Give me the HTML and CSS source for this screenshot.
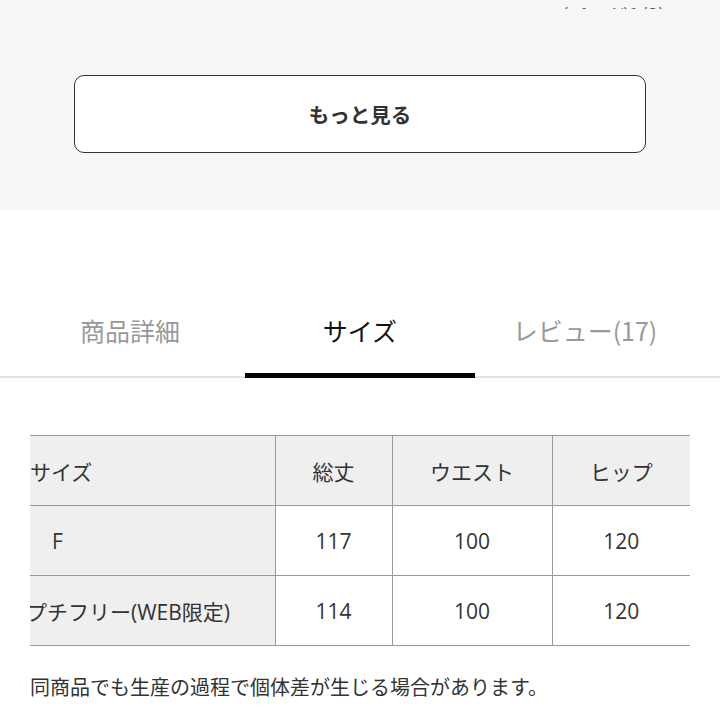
FILE: index.html
```html
<!DOCTYPE html>
<html lang="ja">
<head>
    <meta charset="utf-8">
    <link rel="stylesheet" href="styles.css">
</head>
<body>
    <div class="more-area">
        <div class="peek">
            <span>(ページ1/3)</span>
        </div>
        <button class="more-btn">もっと見る</button>
    </div>

    <div class="tabs">
        <div class="tab first">商品詳細</div>
        <div class="tab active">サイズ</div>
        <div class="tab last">レビュー(17)</div>
    </div>

    <div class="size-wrap">
        <table class="size-table">
            <colgroup>
                <col class="c-label">
                <col class="c-len">
                <col class="c-waist">
                <col class="c-hip">
            </colgroup>
            <thead>
                <tr>
                    <th class="label head">サイズ</th>
                    <th>総丈</th>
                    <th>ウエスト</th>
                    <th>ヒップ</th>
                </tr>
            </thead>
            <tbody>
                <tr>
                    <td class="label f">F</td>
                    <td>117</td>
                    <td>100</td>
                    <td>120</td>
                </tr>
                <tr>
                    <td class="label petit">プチフリー(WEB限定)</td>
                    <td>114</td>
                    <td>100</td>
                    <td>120</td>
                </tr>
            </tbody>
        </table>
    </div>

    <p class="note">同商品でも生産の過程で個体差が生じる場合があります。</p>
</body>
</html>
```

FILE: styles.css
```css
body {
    margin: 0;
    background-color: #fff;
    font-family: "Noto Sans CJK JP", "Noto Sans", sans-serif;
    color: #333;
}
.more-area {
    background-color: #f7f7f7;
    height: 210px;
    overflow: hidden;
}
.peek {
    height: 9px;
    overflow: hidden;
    text-align: right;
    padding-right: 55px;
    color: #555;
    font-size: 20px;
}
.peek span {
    display: inline-block;
    line-height: 20px;
    margin-top: -9px;
}
.more-btn {
    display: block;
    box-sizing: border-box;
    width: 572px;
    height: 78px;
    margin: 66px 0 0 74px;
    background-color: #fff;
    border: 1px solid #333;
    border-radius: 10px;
    font-family: "Noto Sans CJK JP", sans-serif;
    font-size: 20.5px;
    font-weight: bold;
    color: #333;
}
.tabs {
    display: flex;
    margin-top: 80px;
    border-bottom: 2px solid #e3e3e3;
}
.tab {
    flex: 1;
    margin: 0 5px -2px;
    padding: 20px 0 23px;
    line-height: 40px;
    text-align: center;
    font-size: 25px;
    color: #999;
    border-bottom: 5px solid transparent;
}
.tab.first {
    text-indent: 20px;
}
.tab.last {
    text-indent: -30px;
}
.tab.active {
    color: #111;
    border-bottom-color: #000;
}
.size-wrap {
    margin: 57px 30px 0;
    overflow: hidden;
}
.size-table {
    table-layout: fixed;
    margin-left: -6px;
    width: 666px;
    border-collapse: collapse;
    font-family: "Open Sans", "Noto Sans CJK JP", sans-serif;
    font-size: 21px;
    color: #333;
}
.c-label {
    width: 251px;
}
.c-len {
    width: 117px;
}
.c-waist {
    width: 160px;
}
.c-hip {
    width: 138px;
}
.size-table th, .size-table td {
    border: 1px solid #999;
    height: 69px;
    padding: 0;
    text-align: center;
    font-weight: normal;
    white-space: nowrap;
}
.size-table tr > :first-child {
    border-left: none;
}
.size-table tr > :last-child {
    border-right: none;
}
.size-table thead th {
    background-color: #efefef;
}
.size-table .label {
    text-align: left;
    background-color: #efefef;
}
.size-table .head {
    padding-left: 6px;
}
.size-table .f {
    padding-left: 28px;
}
.size-table .petit {
    padding-left: 2px;
}
.note {
    margin: 26px 0 0 30px;
    font-size: 20px;
    line-height: 30px;
    color: #333;
}
```
